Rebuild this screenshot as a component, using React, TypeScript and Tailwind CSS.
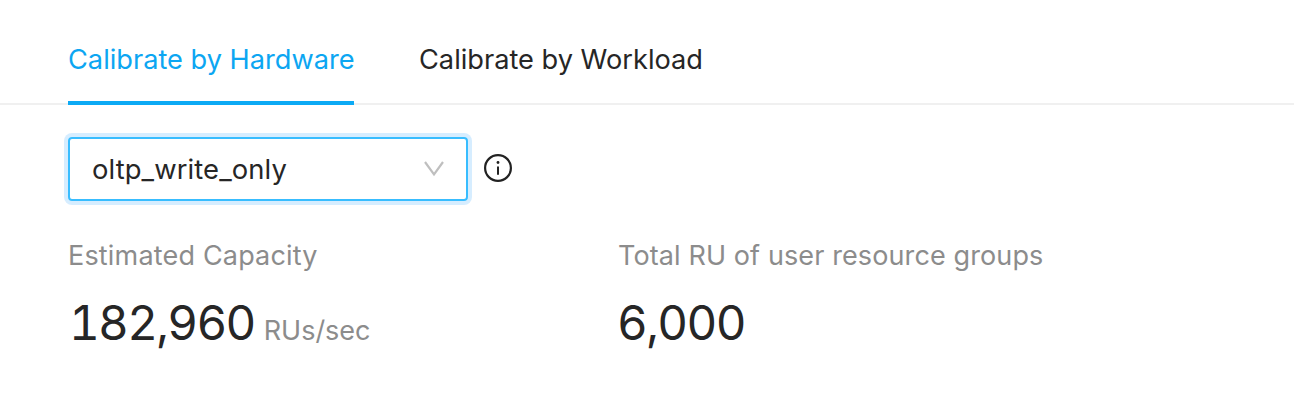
const Tab = ({ label, active }: { label: string; active?: boolean }) => (
  <button
    className={
      active
        ? "h-[105px] w-[286px] border-b-4 border-[#0caaf5] pt-5 text-left whitespace-nowrap text-[#0ca6f2]"
        : "h-[105px] pt-4 text-left whitespace-nowrap text-[#262626]"
    }
  >
    <span className="text-[27.2px]">{label}</span>
  </button>
);

export default function App() {
  return (
    <main className="h-[414px] w-[1294px] overflow-hidden bg-white font-['Inter',sans-serif] text-[#262626]">
      <nav className="flex h-[105px] gap-[65px] border-b-2 border-[#f0f0f0] pl-[68px]">
        <Tab label="Calibrate by Hardware" active />
        <Tab label="Calibrate by Workload" />
      </nav>
      <section className="flex items-center gap-4 pt-8 pl-[68px]">
        <button className="flex h-16 w-[400px] items-center justify-between rounded-[4px] border-2 border-[#38bdff] pr-[22px] pl-[22px] shadow-[0_0_0_4px_#d6edff]">
          <span className="pt-0.5 text-[27.4px] tracking-[0.1px]">oltp_write_only</span>
          <svg width="20" height="16" viewBox="0 0 20 16" fill="none" stroke="#bfbfbf" strokeWidth="2.2">
            <path d="M1 1L10 13.4L19 1" />
          </svg>
        </button>
        <svg className="mb-0.5" width="28" height="28" viewBox="0 0 28 28" fill="none">
          <circle cx="14" cy="14" r="12.9" stroke="#222" strokeWidth="2.2" />
          <path d="M14 12.4v8.4" stroke="#222" strokeWidth="2" />
          <circle cx="14" cy="8.5" r="1.4" fill="#222" />
        </svg>
      </section>
      <section className="grid grid-cols-[550px_1fr] pt-[38px] pl-[68px]">
        <div>
          <h2 className="text-[27px] leading-[34px] tracking-[0.18px] text-[#8c8c8c]">Estimated Capacity</h2>
          <p className="mt-[20px] pl-px leading-[60px] whitespace-nowrap">
            <span className="text-[47.5px] tracking-[-1.7px] tabular-nums">182,960</span>
            <span className="ml-[9px] text-[27px] text-[#8c8c8c]">RUs/sec</span>
          </p>
        </div>
        <div>
          <h2 className="text-[27px] leading-[34px] tracking-[0.11px] text-[#8c8c8c]">Total RU of user resource groups</h2>
          <p className="-ml-px mt-[20px] text-[47.5px] leading-[60px] tracking-[-1.6px] tabular-nums">6,000</p>
        </div>
      </section>
    </main>
  );
}
